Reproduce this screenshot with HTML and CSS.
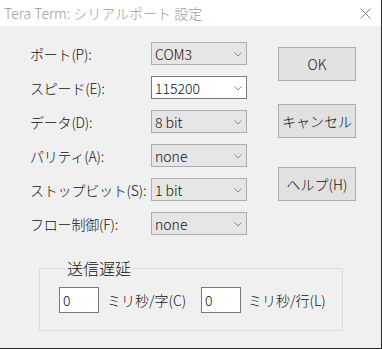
FILE: index.html
```html
<html>
<head>
<title>Tera Term: シリアルポート 設定</title>
<link rel="stylesheet" href="styles.css">
</head>
<body>
<div class="window">
	<div class="titlebar">
		<span class="title">Tera Term: シリアルポート 設定</span>
		<svg class="close" width="11" height="11" viewBox="0 0 11 11"><path d="M0.5 0.5 L10.5 10.5 M10.5 0.5 L0.5 10.5" stroke="#8a8a8a" stroke-width="1" fill="none"/></svg>
	</div>
	<div class="client">
		<div class="top">
			<div class="fields">
				<div class="label">ポート(P):</div>
				<div class="combo"><span>COM3</span><svg class="arrow" width="8" height="5" viewBox="0 0 8 5"><path d="M0.5 0.5 L4 4 L7.5 0.5" stroke="#8a8a8a" fill="none"/></svg></div>
				<div class="label">スピード(E):</div>
				<div class="combo edit"><span>115200</span><svg class="arrow" width="8" height="5" viewBox="0 0 8 5"><path d="M0.5 0.5 L4 4 L7.5 0.5" stroke="#8a8a8a" fill="none"/></svg></div>
				<div class="label">データ(D):</div>
				<div class="combo"><span>8 bit</span><svg class="arrow" width="8" height="5" viewBox="0 0 8 5"><path d="M0.5 0.5 L4 4 L7.5 0.5" stroke="#8a8a8a" fill="none"/></svg></div>
				<div class="label">パリティ(A):</div>
				<div class="combo"><span>none</span><svg class="arrow" width="8" height="5" viewBox="0 0 8 5"><path d="M0.5 0.5 L4 4 L7.5 0.5" stroke="#8a8a8a" fill="none"/></svg></div>
				<div class="label">ストップビット(S):</div>
				<div class="combo"><span>1 bit</span><svg class="arrow" width="8" height="5" viewBox="0 0 8 5"><path d="M0.5 0.5 L4 4 L7.5 0.5" stroke="#8a8a8a" fill="none"/></svg></div>
				<div class="label">フロー制御(F):</div>
				<div class="combo"><span>none</span><svg class="arrow" width="8" height="5" viewBox="0 0 8 5"><path d="M0.5 0.5 L4 4 L7.5 0.5" stroke="#8a8a8a" fill="none"/></svg></div>
			</div>
			<div class="buttons">
				<div class="button ok">OK</div>
				<div class="button cancel">キャンセル</div>
				<div class="button help">ヘルプ(H)</div>
			</div>
		</div>
		<fieldset class="delay">
			<legend>送信遅延</legend>
			<div class="delayrow">
				<div class="textbox">0</div>
				<span class="unit">ミリ秒/字(C)</span>
				<div class="textbox">0</div>
				<span class="unit">ミリ秒/行(L)</span>
			</div>
		</fieldset>
	</div>
</div>
</body>
</html>
```

FILE: styles.css
```css
body{
	margin:0;
	background-color:#f0f0f0;
	font-family: "Noto Sans CJK JP", "Noto Sans", sans-serif;
	font-size:14px;
	font-weight:300;
	color:#111;
}
.window{
	width:381px;
	height:348px;
	border-right:1px solid #2b2b2b;
	border-bottom:1px solid #2b2b2b;
	background-color:#f0f0f0;
}
.titlebar{
	height:26px;
	background-color:#ffffff;
	display:flex;
	align-items:center;
	justify-content:space-between;
	padding-left:4px;
	padding-right:10px;
}
.title{
	color:#9a9a9a;
	font-size:14px;
	line-height:16px;
}
.close{
	margin-top:1px;
}

.client{
	padding-top:16px;
	padding-left:30px;
}
.top{
	display:flex;
}
.fields{
	display:grid;
	grid-template-columns:121px 96px;
	grid-auto-rows:23px;
	row-gap:11px;
}
.label{
	display:flex;
	align-items:center;
	white-space:nowrap;
	line-height:16px;
	letter-spacing:-0.2px;
}
.combo{
	box-sizing:border-box;
	border:1px solid #adadad;
	background-color:#e5e5e5;
	display:flex;
	align-items:center;
	justify-content:space-between;
	padding-left:3px;
	padding-right:4px;
	line-height:16px;
}
.combo.edit{
	background-color:#ffffff;
	border-color:#7a7a7a;
}
.arrow{
	margin-top:1px;
}

.buttons{
	margin-left:31px;
	padding-top:5px;
	display:flex;
	flex-direction:column;
}
.button{
	box-sizing:border-box;
	width:78px;
	height:34px;
	border:1px solid #adadad;
	background-color:#e1e1e1;
	display:flex;
	align-items:center;
	justify-content:center;
	white-space:nowrap;
	line-height:16px;
}
.cancel{ margin-top:23px; }
.help{ margin-top:29px; }

.delay{
	box-sizing:border-box;
	width:304px;
	margin:25px 0 0 9px;
	padding:11px 0 17px 19px;
	border:1px solid #dcdcdc;
}
.delay legend{
	font-size:16px;
	line-height:16px;
	padding:0 2px;
	margin-left:6px;
}
.delayrow{
	display:flex;
	align-items:center;
}
.textbox{
	box-sizing:border-box;
	width:40px;
	height:26px;
	border:1px solid #7a7a7a;
	background-color:#ffffff;
	padding-left:3px;
	line-height:24px;
}
.unit{
	margin-left:8px;
	white-space:nowrap;
}
.unit.first{
	width:84px;
}
.delayrow .unit:nth-child(2){
	width:84px;
	margin-right:10px;
}
.delayrow .unit:nth-child(4){
	margin-left:7px;
}
```
